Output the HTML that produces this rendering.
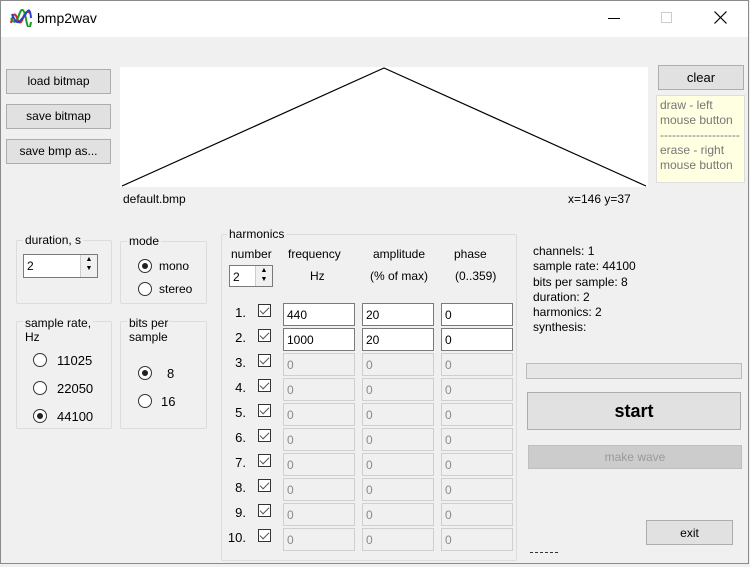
<!DOCTYPE html>
<html><head><meta charset="utf-8"><style>
*{box-sizing:border-box;margin:0;padding:0}
body{width:750px;height:567px;background:#f0f0f0;font-family:"Liberation Sans",sans-serif;font-size:12px;color:#000;position:relative;overflow:hidden}
.a{position:absolute}
.win{left:0;top:0;width:749px;height:564px;border:1px solid #8a8a8a;background:#f0f0f0}
.title{left:1px;top:1px;width:747px;height:36px;background:#fff}
.btn{position:absolute;background:#e1e1e1;border:1px solid #adadad;text-align:center;font-size:12px}
.grp{position:absolute;border:1px solid #dcdcdc;border-radius:2px}
.lg{position:absolute;background:#f0f0f0;padding:0 2px;top:-8px;left:6px;line-height:14px}
.inp{position:absolute;background:#fff;border:1px solid #7a7a7a;height:23px;padding:3px 3px;font-size:12px;line-height:16px}
.dis{background:#f0f0f0;border:1px solid #cfcfcf;color:#8a8a8a}
.cb{position:absolute;width:13px;height:13px;border:1px solid #333;background:#fff}
.cb:after{content:"";position:absolute;left:3px;top:0px;width:4px;height:8px;border:solid #555;border-width:0 1.5px 1.5px 0;transform:rotate(45deg)}
.rd{position:absolute;width:14px;height:14px;border:1px solid #333;border-radius:50%;background:#fff}
.rd.on:after{content:"";position:absolute;left:3px;top:3px;width:6px;height:6px;border-radius:50%;background:#222}
.spin{position:absolute;width:17px;border-left:1px solid #ccc;background:#f0f0f0;right:0;top:0;bottom:0;font-size:7px;text-align:center;line-height:9px}
.num{position:absolute;width:30px;text-align:right;font-size:13px}
</style></head><body>
<div class="a win"></div>
<div class="a title"></div>
<svg class="a" style="left:10px;top:9px" width="22" height="18" viewBox="0 0 22 18"><path d="M1 14 Q4 0 7 9 T13 9 T20 4" stroke="#d22" stroke-width="2" fill="none"/><path d="M1 9 Q5 18 9 6 T16 10 T21 13" stroke="#1a9a2a" stroke-width="2" fill="none"/><path d="M2 5 Q6 16 10 12 T17 3 T21 9" stroke="#2340d0" stroke-width="2" fill="none"/></svg>
<div class="a" style="left:37px;top:10px;font-size:14px">bmp2wav</div>
<div class="a" style="left:608px;top:18px;width:12px;height:1px;background:#000"></div>
<div class="a" style="left:661px;top:12px;width:11px;height:11px;border:1px solid #ccc"></div>
<svg class="a" style="left:714px;top:11px" width="13" height="13"><path d="M0.5 0.5L12.5 12.5M12.5 0.5L0.5 12.5" stroke="#000" stroke-width="1.2"/></svg>

<div class="btn" style="left:6px;top:69px;width:105px;height:25px;line-height:23px">load bitmap</div>
<div class="btn" style="left:6px;top:104px;width:105px;height:25px;line-height:23px">save bitmap</div>
<div class="btn" style="left:6px;top:139px;width:105px;height:25px;line-height:23px">save bmp as...</div>

<div class="a" style="left:120px;top:67px;width:528px;height:120px;background:#fff"></div>
<svg class="a" style="left:120px;top:67px" width="528" height="120"><polyline points="2,119 264,1 526,119" fill="none" stroke="#000" stroke-width="1.2"/></svg>
<div class="a" style="left:123px;top:192px">default.bmp</div>
<div class="a" style="left:568px;top:192px">x=146 y=37</div>

<div class="btn" style="left:658px;top:65px;width:86px;height:25px;line-height:24px;font-size:13px">clear</div>
<div class="a" style="left:656px;top:95px;width:89px;height:88px;background:#ffffe1;border:1px solid #ddd;color:#777;font-size:12px;line-height:15px;padding:2px 3px">draw - left<br>mouse button<br>--------------------<br>erase - right<br>mouse button</div>

<div class="grp" style="left:16px;top:240px;width:96px;height:64px"><div class="lg">duration, s</div></div>
<div class="inp" style="left:23px;top:254px;width:75px;height:24px">2<div class="spin">▲<br>▼</div></div>

<div class="grp" style="left:120px;top:241px;width:87px;height:63px"><div class="lg">mode</div></div>
<div class="rd on" style="left:138px;top:259px"></div><div class="a" style="left:159px;top:259px">mono</div>
<div class="rd" style="left:138px;top:282px"></div><div class="a" style="left:159px;top:282px">stereo</div>

<div class="grp" style="left:16px;top:321px;width:96px;height:108px"><div class="lg" style="top:-6px">sample rate,<br>Hz</div></div>
<div class="rd" style="left:33px;top:353px"></div><div class="a" style="left:57px;top:353px;font-size:13px">11025</div>
<div class="rd" style="left:33px;top:381px"></div><div class="a" style="left:57px;top:381px;font-size:13px">22050</div>
<div class="rd on" style="left:33px;top:409px"></div><div class="a" style="left:57px;top:409px;font-size:13px">44100</div>

<div class="grp" style="left:120px;top:321px;width:87px;height:108px"><div class="lg" style="top:-6px">bits per<br>sample</div></div>
<div class="rd on" style="left:138px;top:366px"></div><div class="a" style="left:167px;top:366px;font-size:13px">8</div>
<div class="rd" style="left:138px;top:394px"></div><div class="a" style="left:161px;top:394px;font-size:13px">16</div>

<div class="grp" style="left:221px;top:234px;width:296px;height:327px"><div class="lg" style="left:5px">harmonics</div></div>
<div class="a" style="left:231px;top:247px">number</div>
<div class="a" style="left:288px;top:247px">frequency</div>
<div class="a" style="left:373px;top:247px">amplitude</div>
<div class="a" style="left:454px;top:247px">phase</div>
<div class="a" style="left:310px;top:269px">Hz</div>
<div class="a" style="left:370px;top:269px">(% of max)</div>
<div class="a" style="left:455px;top:269px">(0..359)</div>
<div class="inp" style="left:229px;top:265px;width:44px;height:22px">2<div class="spin">▲<br>▼</div></div>

<div class="num" style="left:216px;top:305px">1.</div><div class="cb" style="left:258px;top:304px"></div>
<div class="inp" style="left:283px;top:303px;width:72px">440</div><div class="inp" style="left:362px;top:303px;width:72px">20</div><div class="inp" style="left:441px;top:303px;width:72px">0</div>
<div class="num" style="left:216px;top:330px">2.</div><div class="cb" style="left:258px;top:329px"></div>
<div class="inp" style="left:283px;top:328px;width:72px">1000</div><div class="inp" style="left:362px;top:328px;width:72px">20</div><div class="inp" style="left:441px;top:328px;width:72px">0</div>

<div class="num" style="left:216px;top:355px">3.</div><div class="cb" style="left:258px;top:354px"></div>
<div class="inp dis" style="left:283px;top:353px;width:72px">0</div><div class="inp dis" style="left:362px;top:353px;width:72px">0</div><div class="inp dis" style="left:441px;top:353px;width:72px">0</div>
<div class="num" style="left:216px;top:380px">4.</div><div class="cb" style="left:258px;top:379px"></div>
<div class="inp dis" style="left:283px;top:378px;width:72px">0</div><div class="inp dis" style="left:362px;top:378px;width:72px">0</div><div class="inp dis" style="left:441px;top:378px;width:72px">0</div>
<div class="num" style="left:216px;top:405px">5.</div><div class="cb" style="left:258px;top:404px"></div>
<div class="inp dis" style="left:283px;top:403px;width:72px">0</div><div class="inp dis" style="left:362px;top:403px;width:72px">0</div><div class="inp dis" style="left:441px;top:403px;width:72px">0</div>
<div class="num" style="left:216px;top:430px">6.</div><div class="cb" style="left:258px;top:429px"></div>
<div class="inp dis" style="left:283px;top:428px;width:72px">0</div><div class="inp dis" style="left:362px;top:428px;width:72px">0</div><div class="inp dis" style="left:441px;top:428px;width:72px">0</div>
<div class="num" style="left:216px;top:455px">7.</div><div class="cb" style="left:258px;top:454px"></div>
<div class="inp dis" style="left:283px;top:453px;width:72px">0</div><div class="inp dis" style="left:362px;top:453px;width:72px">0</div><div class="inp dis" style="left:441px;top:453px;width:72px">0</div>
<div class="num" style="left:216px;top:480px">8.</div><div class="cb" style="left:258px;top:479px"></div>
<div class="inp dis" style="left:283px;top:478px;width:72px">0</div><div class="inp dis" style="left:362px;top:478px;width:72px">0</div><div class="inp dis" style="left:441px;top:478px;width:72px">0</div>
<div class="num" style="left:216px;top:505px">9.</div><div class="cb" style="left:258px;top:504px"></div>
<div class="inp dis" style="left:283px;top:503px;width:72px">0</div><div class="inp dis" style="left:362px;top:503px;width:72px">0</div><div class="inp dis" style="left:441px;top:503px;width:72px">0</div>
<div class="num" style="left:216px;top:530px">10.</div><div class="cb" style="left:258px;top:529px"></div>
<div class="inp dis" style="left:283px;top:528px;width:72px">0</div><div class="inp dis" style="left:362px;top:528px;width:72px">0</div><div class="inp dis" style="left:441px;top:528px;width:72px">0</div>

<div class="a" style="left:533px;top:244px;line-height:15.3px">channels: 1<br>sample rate: 44100<br>bits per sample: 8<br>duration: 2<br>harmonics: 2<br>synthesis:</div>
<div class="a" style="left:526px;top:363px;width:216px;height:16px;background:#e6e6e6;border:1px solid #bcbcbc"></div>
<div class="btn" style="left:527px;top:392px;width:214px;height:38px;line-height:36px;font-size:18px;font-weight:bold">start</div>
<div class="a" style="left:528px;top:445px;width:214px;height:24px;background:#cccccc;border:1px solid #bfbfbf;color:#9a9a9a;text-align:center;line-height:22px">make wave</div>
<div class="btn" style="left:646px;top:520px;width:87px;height:25px;line-height:24px">exit</div>
<div class="a" style="left:530px;top:552px;width:28px;height:1px;border-top:1px dashed #333"></div>
</body></html>
